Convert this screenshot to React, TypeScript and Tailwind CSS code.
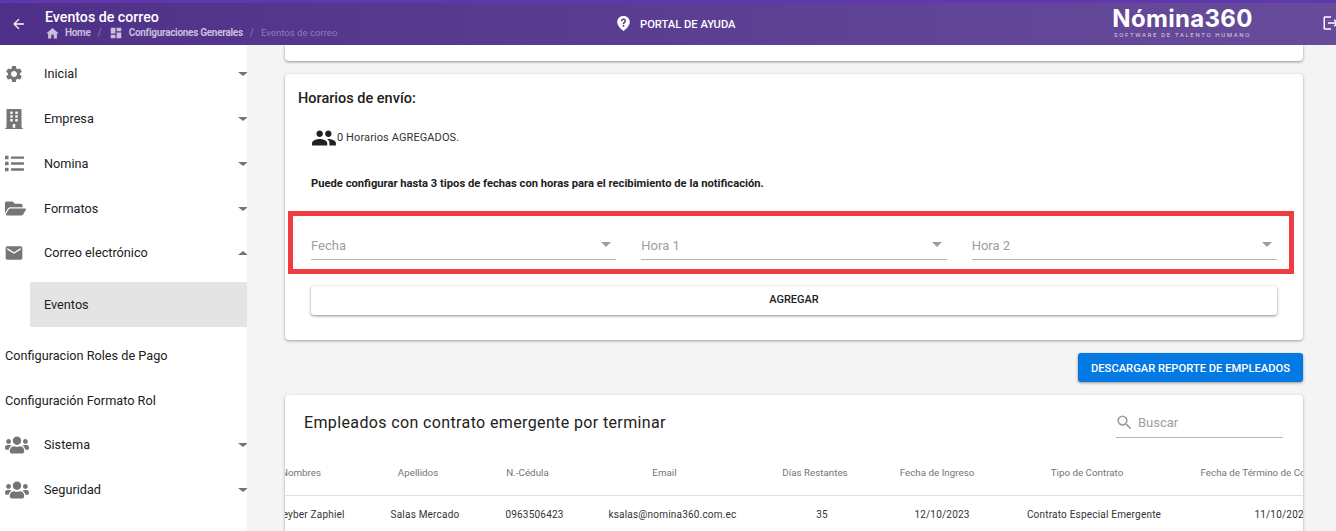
import { MdArrowBack, MdDashboard, MdEmail, MdHome, MdLogout, MdPeople, MdSearch, MdSettings } from "react-icons/md";
import { FaBuilding, FaFolderOpen, FaList, FaUsers } from "react-icons/fa";
import type { ComponentType } from "react";

type IconType = ComponentType<{ className?: string }>;

const menuTop: { label: string; Icon: IconType; iconClass: string; open?: boolean; tight?: boolean }[] = [
  { label: "Inicial", Icon: MdSettings, iconClass: "text-[20px] ml-[4px]" },
  { label: "Empresa", Icon: FaBuilding, iconClass: "text-[20px] ml-[4px]" },
  { label: "Nomina", Icon: FaList, iconClass: "text-[19px] ml-[5px]" },
  { label: "Formatos", Icon: FaFolderOpen, iconClass: "text-[21px] ml-[5px]" },
  { label: "Correo electrónico", Icon: MdEmail, iconClass: "text-[20px] ml-[4px]", open: true, tight: true },
];

const columns = [
  { label: "Nombres", width: "w-[115px]", shift: "pr-[19px]", value: "Keyber Zaphiel" },
  { label: "Apellidos", width: "w-[114px]", shift: "pr-[14px]", value: "Salas Mercado" },
  { label: "N.-Cédula", width: "w-[105px]", shift: "pr-[14px]", value: "0963506423" },
  { label: "Email", width: "w-[171px]", shift: "pr-[16px]", value: "ksalas@nomina360.com.ec" },
  { label: "Días Restantes", width: "w-[128px]", shift: "pr-[14px]", value: "35" },
  { label: "Fecha de Ingreso", width: "w-[112px]", shift: "pr-[10px]", value: "12/10/2023" },
  { label: "Tipo de Contrato", width: "w-[192px]", shift: "pr-[14px]", value: "Contrato Especial Emergente" },
  { label: "Fecha de Término de Contrato", width: "w-[184px]", shift: "pr-[32px]", value: "11/10/2023" },
];

function Caret({ up }: { up?: boolean }) {
  return (
    <span
      className={`w-0 h-0 -mr-[1px] border-x-[5px] border-x-transparent ${
        up ? "border-b-[4px] border-b-[#7a716c]" : "border-t-[4px] border-t-[#7a716c]"
      }`}
    />
  );
}

function MenuRow({ label, Icon, iconClass, open, tight }: { label: string; Icon: IconType; iconClass: string; open?: boolean; tight?: boolean }) {
  return (
    <div className={`h-[45px] flex items-center shrink-0 ${tight ? "-mt-[1px]" : ""}`}>
      <span className="w-[44px] shrink-0 flex items-center text-[#757575]">
        <Icon className={iconClass} />
      </span>
      <span className="flex-1 text-[12.7px] text-[#212121]">{label}</span>
      <Caret up={open} />
    </div>
  );
}

function SelectField({ label }: { label: string }) {
  return (
    <div className="flex-1 h-[30px] border-b border-[#b5b5b5] flex items-center justify-between pr-[5px]">
      <span className="mt-[2px] text-[13px] text-[#9e9e9e]">{label}</span>
      <span className="w-0 h-0 border-x-[5px] border-x-transparent border-t-[5px] border-t-[#9e9e9e]" />
    </div>
  );
}

export default function App() {
  return (
    <div className="h-[531px] overflow-hidden flex flex-col bg-[#f4f4f4] font-['Roboto',sans-serif]">
      <header className="h-[45px] shrink-0 border-t-[3px] border-[#6236ae] bg-gradient-to-r from-[#4f3088] to-[#684c9b] flex items-center text-white relative">
        <MdArrowBack className="text-[16px] ml-[10px] w-[17px] shrink-0" />
        <div className="ml-[18px] w-[560px]">
          <div className="text-[14.2px] font-medium leading-[18px]">Eventos de correo</div>
          <div className="flex items-center text-[10px] leading-[14px] text-[#c9bfdd]">
            <MdHome className="text-[15px] mr-[5px]" />
            <span className="font-bold tracking-[-0.3px]">Home</span>
            <span className="mx-[7px] text-[#8f7db3]">/</span>
            <MdDashboard className="text-[14px] mr-[6px]" />
            <span className="font-bold tracking-[-0.3px]">Configuraciones Generales</span>
            <span className="mx-[7px] text-[#8f7db3]">/</span>
            <span className="text-[9.6px] text-[#8f7db3]">Eventos de correo</span>
          </div>
        </div>
        <div className="flex items-center w-[495px] shrink-0 ml-[11px]">
          <svg viewBox="0 0 24 24" className="w-[15px] h-[17px] fill-white">
            <path d="M12 0C5.9 0 2 4.4 2 9.6c0 5 4.6 10.6 10 14.4 5.4-3.8 10-9.4 10-14.4C22 4.4 18.1 0 12 0zm1.3 17h-2.6v-2.6h2.6V17zm2.6-7.4c-.6.9-1.7 1.4-2.3 2.2-.3.4-.3.8-.3 1.4h-2.6c0-1.2.1-2 .7-2.7.7-.8 1.9-1.3 2.2-2.2.3-1-.6-1.9-1.6-1.9s-1.8.7-1.9 1.8H7.6C7.8 5.6 9.6 4 12 4c3.2 0 5.2 3 3.9 5.6z" />
          </svg>
          <span className="ml-[9px] mt-[3px] text-[11.2px] font-medium">PORTAL DE AYUDA</span>
        </div>
        <div className="w-[143px] shrink-0 flex flex-col items-center -mt-[3px]">
          <span className="text-[24px] font-['Inter',sans-serif] font-bold leading-[24px] tracking-[0.3px]">Nómina360</span>
          <span className="text-[6px] leading-[7px] tracking-[1.65px] text-[#d8d0e6]">SOFTWARE DE TALENTO HUMANO</span>
        </div>
        <MdLogout className="absolute left-[1322px] top-[11px] text-[18px]" />
      </header>

      <div className="flex-1 flex min-h-0">
        <aside className="w-[247px] shrink-0 bg-white flex flex-col pt-[6px] overflow-hidden">
          {menuTop.map((m) => (
            <MenuRow key={m.label} {...m} />
          ))}
          <div className="h-[45px] ml-[30px] mt-[7px] bg-[#e4e4e4] flex items-center pl-[14px] text-[12.7px] text-[#212121] shrink-0">
            Eventos
          </div>
          <div className="h-[45px] mt-[6px] flex items-center pl-[5px] text-[12.7px] text-[#212121] shrink-0">
            Configuracion Roles de Pago
          </div>
          <div className="h-[45px] flex items-center pl-[5px] text-[12.7px] text-[#212121] shrink-0">
            Configuración Formato Rol
          </div>
          <MenuRow label="Sistema" Icon={FaUsers} iconClass="text-[24px] ml-[5px]" tight />
          <MenuRow label="Seguridad" Icon={FaUsers} iconClass="text-[24px] ml-[5px]" />
        </aside>

        <main className="flex-1 min-w-0 pl-[38px] pr-[33px] flex flex-col overflow-hidden">
          <div className="h-[16px] shrink-0 bg-white rounded-b-[4px] shadow-[0_1px_3px_rgba(0,0,0,0.4)]" />

          <section className="mt-[13px] h-[266px] shrink-0 bg-white rounded-[4px] shadow-[0_1px_3px_rgba(0,0,0,0.35)] px-[13px] pt-[16px] relative">
            <h2 className="text-[14.5px] font-medium leading-[18px] text-[#212121]">Horarios de envío:</h2>
            <div className="ml-[13px] mt-[18px] h-[24px] flex items-center text-[11px] tracking-[0.1px] text-[#333]">
              <MdPeople className="text-[26px] text-[#212121]" />
              <span>0 Horarios AGREGADOS.</span>
            </div>
            <p className="ml-[13px] mt-[27px] text-[11.2px] font-bold leading-[14px] text-[#212121]">
              Puede configurar hasta 3 tipos de fechas con horas para el recibimiento de la notificación.
            </p>
            <div className="-ml-[10px] -mr-[4px] mt-[20px] h-[63px] border-[5px] border-[#ef3c40] flex gap-[25px] pl-[18px] pr-[12px] pt-[14px]">
              <SelectField label="Fecha" />
              <SelectField label="Hora 1" />
              <SelectField label="Hora 2" />
            </div>
            <button className="block w-[calc(100%-26px)] mx-[13px] mt-[12px] h-[29px] bg-white rounded-[3px] shadow-[0_1px_3px_rgba(0,0,0,0.45)] text-[11px] font-medium text-[#212121]">
              AGREGAR
            </button>
          </section>

          <div className="mt-[13px] flex justify-end shrink-0">
            <button className="h-[29px] w-[225px] pt-[3px] bg-[#0279e3] rounded-[3px] shadow-[0_1px_3px_rgba(0,0,0,0.4)] text-[11.2px] font-medium text-white">
              DESCARGAR REPORTE DE EMPLEADOS
            </button>
          </div>

          <section className="mt-[13px] flex-1 min-h-0 bg-white rounded-t-[4px] shadow-[0_1px_3px_rgba(0,0,0,0.35)] overflow-hidden">
            <div className="h-[55px] flex items-center justify-between pl-[19px] pr-[20px]">
              <h2 className="text-[16px] tracking-[0.37px] text-[#212121]">Empleados con contrato emergente por terminar</h2>
              <div className="w-[167px] h-[31px] border-b border-[#b5b5b5] flex items-center text-[#9e9e9e]">
                <MdSearch className="text-[19px] -ml-[1px]" />
                <span className="ml-[4px] mt-[1px] text-[13px]">Buscar</span>
              </div>
            </div>
            <div className="-ml-[32px] w-[1121px]">
              <div className="flex h-[46px] pt-[2px] items-center border-b border-[#e0e0e0]">
                {columns.map((c) => (
                  <div key={c.label} className={`${c.width} ${c.shift} shrink-0 text-center whitespace-nowrap text-[9.8px] text-[#757575]`}>
                    {c.label}
                  </div>
                ))}
              </div>
              <div className="flex h-[37px] items-center">
                {columns.map((c) => (
                  <div key={c.label} className={`${c.width} shrink-0 text-center whitespace-nowrap text-[10px] tracking-[0.2px] text-[#333]`}>
                    {c.value}
                  </div>
                ))}
              </div>
            </div>
          </section>
        </main>
      </div>
    </div>
  );
}
